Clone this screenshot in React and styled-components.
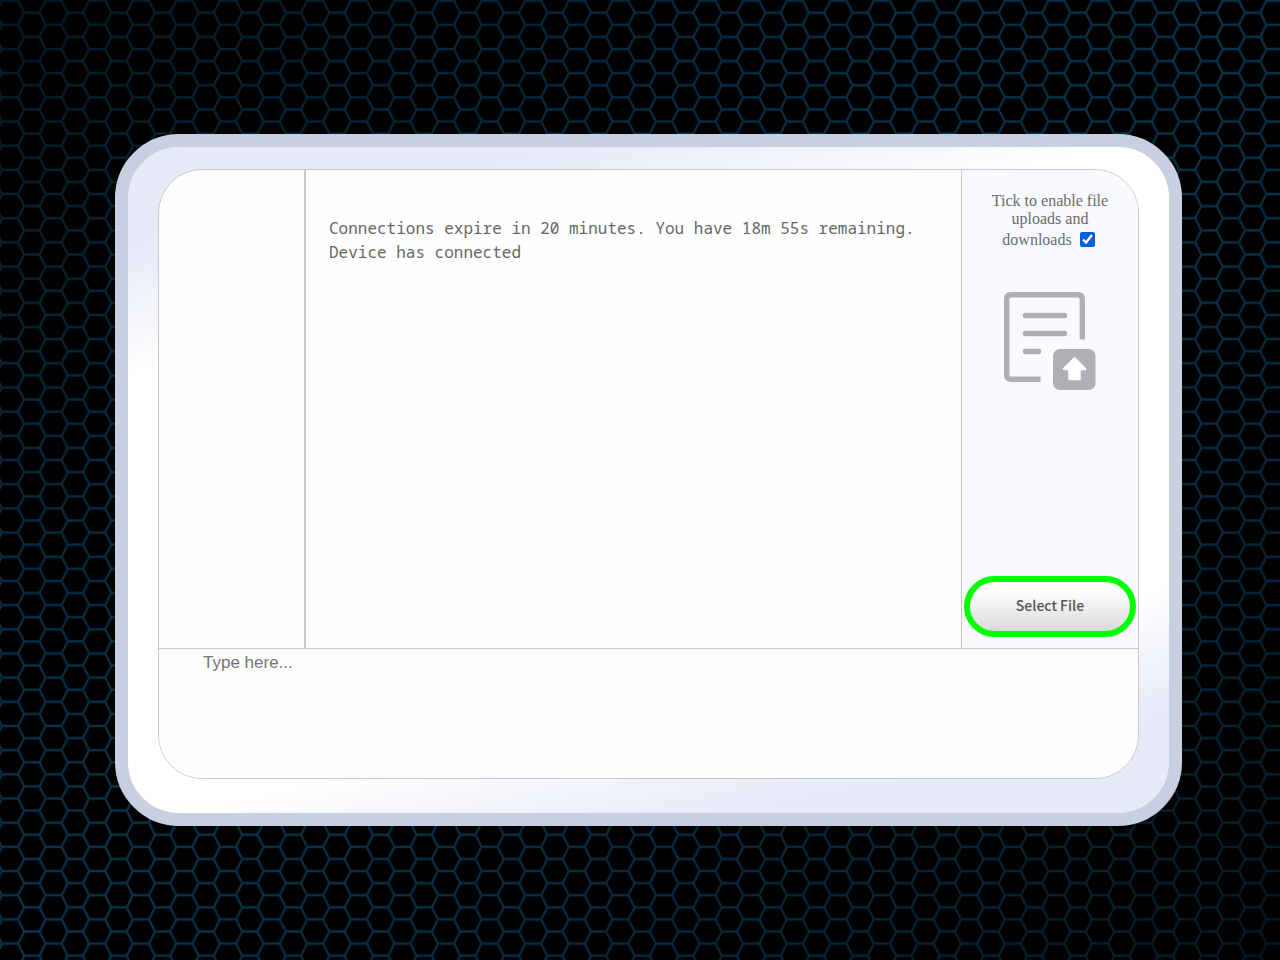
import React from "react";
import styled, { createGlobalStyle } from "styled-components";

const GlobalStyle = createGlobalStyle`
  * {
    box-sizing: border-box;
  }
  body {
    margin: 0;
    background: #000;
  }
`;
const Page = styled.main`
  position: relative;
  min-height: 100vh;
  display: flex;
  align-items: center;
  padding: 134px 98px 134px 115px;
`;
const HexSvg = styled.svg`
  position: absolute;
  inset: 0;
  width: 100%;
  height: 100%;
`;
const Frame = styled.div`
  position: relative;
  flex: 1;
  padding: 22px 30px 34px;
  border: 13px solid #c7cfe0;
  border-radius: 64px;
  background: linear-gradient(
    167deg,
    #e6eaf6 0%,
    #e8ebf8 12%,
    #ffffff 25%,
    #ffffff 75%,
    #e8ebf8 88%,
    #e6eaf6 100%
  );
`;
const Terminal = styled.section`
  overflow: hidden;
  border: 1px solid #c8c8c8;
  border-radius: 44px;
  background: #fefefe;
`;
const TopRow = styled.div`
  display: grid;
  grid-template-columns: 147px 1fr 177px;
  min-height: 479px;
  border-bottom: 1px solid #c8c8c8;
`;
const SideColumn = styled.div`
  border-right: 2px solid #c8c8c8;
`;
const Messages = styled.div`
  padding: 46px 23px;
  font-family: "Noto Sans Mono", "DejaVu Sans Mono", monospace;
  font-size: 16px;
  line-height: 24px;
  color: #666;
`;
const Message = styled.p`
  margin: 0;
`;
const FileColumn = styled.div`
  display: flex;
  flex-direction: column;
  align-items: center;
  padding: 22px 2px 11px;
  border-left: 1px solid #c8c8c8;
  background: #f9faff;
`;
const TickLabel = styled.label`
  width: 124px;
  font-family: "Liberation Serif", serif;
  font-size: 16px;
  line-height: 18px;
  text-align: center;
  color: #6a6a6a;
`;
const Tick = styled.input`
  width: 15px;
  height: 15px;
  margin: 4px 3px 3px 4px;
  vertical-align: -2px;
  accent-color: #0060df;
`;
const UploadSvg = styled.svg`
  width: 92px;
  height: 98px;
  margin-top: 42px;
`;
const SelectButton = styled.button`
  width: 100%;
  height: 61px;
  margin-top: auto;
  padding: 0 0 3px;
  border: 6px solid #00ff00;
  border-radius: 31px;
  background: linear-gradient(#ffffff 15%, #dadadd);
  font-family: "Noto Sans CJK SC", "Noto Sans", sans-serif;
  font-size: 14px;
  font-weight: 500;
  color: #555;
`;
const TypeBox = styled.textarea`
  display: block;
  width: 100%;
  height: 129px;
  padding: 4px 44px;
  border: 0;
  outline: 0;
  resize: none;
  background: #fefefe;
  font-family: "Liberation Sans", sans-serif;
  font-size: 17px;
  line-height: 20px;
  color: #666;
  &::placeholder {
    color: #757575;
  }
`;

function HexBackground() {
  return (
    <HexSvg aria-hidden="true">
      <defs>
        <pattern
          id="hexes"
          width="43.6"
          height="24.18"
          patternUnits="userSpaceOnUse"
          patternTransform="translate(10 0.6)"
        >
          <path
            d="M-8 0H8L14.2 12.09L8 24.18H-8M8 0L14.2 12.09H29.4L35.6 0H51.6M29.4 12.09L35.6 24.18H51.6"
            fill="none"
            stroke="#08344f"
            strokeWidth="2.2"
          />
        </pattern>
        <linearGradient id="shade" x1="0" y1="0" x2="1" y2="1">
          <stop offset="0" stopColor="#000" stopOpacity="0.5" />
          <stop offset="0.3" stopColor="#000" stopOpacity="0.15" />
          <stop offset="0.5" stopColor="#000" stopOpacity="0" />
          <stop offset="0.7" stopColor="#000" stopOpacity="0.15" />
          <stop offset="1" stopColor="#000" stopOpacity="0.5" />
        </linearGradient>
      </defs>
      <rect width="100%" height="100%" fill="url(#hexes)" />
      <rect width="100%" height="100%" fill="url(#shade)" />
    </HexSvg>
  );
}

function UploadIcon() {
  return (
    <UploadSvg viewBox="0 0 92 98" fill="none" stroke="#afb0b4" aria-hidden="true">
      <path
        d="M36.5 87.3H7Q2.7 87.3 2.7 83V7Q2.7 2.7 7 2.7H74Q78.3 2.7 78.3 7V47.5"
        strokeWidth="5.4"
      />
      <path
        d="M21.5 23.5H60.5M21.5 41.5H60.5M21.5 59.5H34.5"
        strokeWidth="5.4"
        strokeLinecap="round"
      />
      <rect x="49" y="57" width="42.5" height="41" rx="7" fill="#afb0b4" stroke="none" />
      <path
        d="M70.5 66.5L81 77H75.5V87H65.5V77H60Z"
        fill="#fff"
        stroke="#fff"
        strokeWidth="2.5"
        strokeLinejoin="round"
      />
    </UploadSvg>
  );
}

export default function App() {
  return (
    <Page>
      <GlobalStyle />
      <HexBackground />
      <Frame>
        <Terminal>
          <TopRow>
            <SideColumn />
            <Messages>
              <Message>Connections expire in 20 minutes. You have 18m 55s remaining.</Message>
              <Message>Device has connected</Message>
            </Messages>
            <FileColumn>
              <TickLabel>
                Tick to enable file uploads and downloads <Tick type="checkbox" defaultChecked />
              </TickLabel>
              <UploadIcon />
              <SelectButton type="button">Select File</SelectButton>
            </FileColumn>
          </TopRow>
          <TypeBox aria-label="Message" placeholder="Type here..." />
        </Terminal>
      </Frame>
    </Page>
  );
}
